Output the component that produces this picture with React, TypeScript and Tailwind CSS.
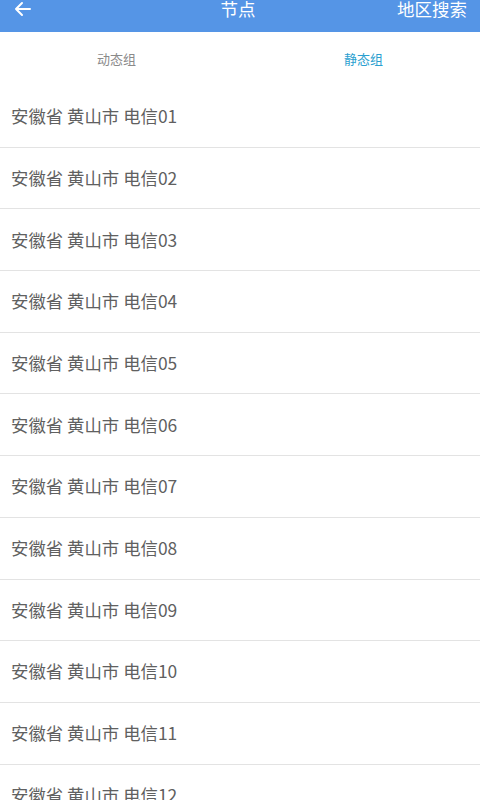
import React from "react";

const rows = ["01","02","03","04","05","06","07","08","09","10","11","12","13"];

export default function App() {
  return (
    <div className="w-[480px] h-[800px] overflow-hidden bg-white" style={{ fontFamily: '"Noto Sans CJK SC", "Noto Sans", sans-serif' }}>
      <div className="h-[32px] bg-[#5595e6] overflow-hidden relative">
        <div className="h-[17px] flex items-center justify-between px-[14px]">
          <svg width="17" height="16" viewBox="0 0 17 16" fill="none" stroke="white" strokeWidth="2" strokeLinecap="round" strokeLinejoin="round">
            <path d="M16 8H2M8 2L2 8l6 6" />
          </svg>
          <span className="absolute left-1/2 -translate-x-[50%] -ml-[2px] text-[17.5px] leading-none text-white top-[0px]">节点</span>
          <span className="text-[17.5px] leading-none text-white -mr-[1px]">地区搜索</span>
        </div>
      </div>
      <div className="h-[54px] flex items-center">
        <div className="flex-1 text-center text-[13px] text-[#8a8a8a] pr-[14px]">动态组</div>
        <div className="flex-1 text-center text-[13px] text-[#2b9fd0]">静态组</div>
      </div>
      <div>
        {rows.map((r) => (
          <div key={r} className="h-[61.7px] border-b border-[#e3e3e3] flex items-center pl-[11px] text-[17.4px] text-[#606060]">
            安徽省 黄山市 电信{r}
          </div>
        ))}
      </div>
    </div>
  );
}
